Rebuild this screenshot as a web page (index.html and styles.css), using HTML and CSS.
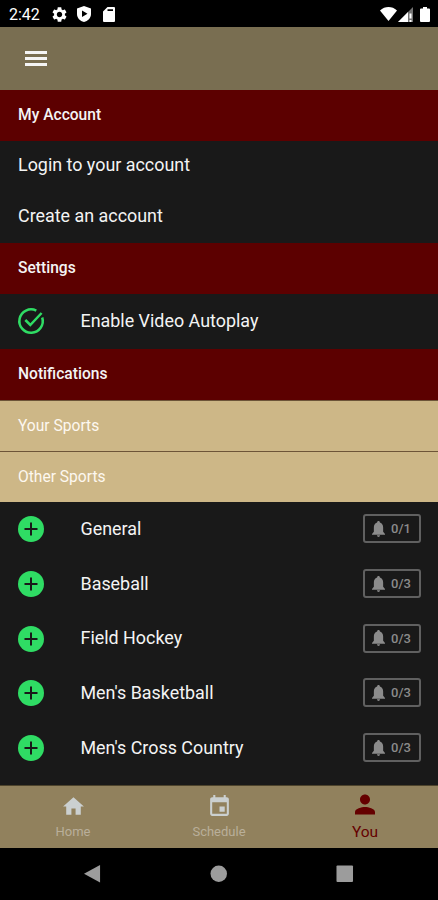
FILE: index.html
```html
<!DOCTYPE html>
<html lang="en">
<head>
    <meta charset="UTF-8">
    <title>Account</title>
    <meta name="viewport" content="width=device-width, initial-scale=1.0">
    <link rel="stylesheet" href="styles.css">
</head>
<body>
    <svg class="sprite">
        <symbol id="plus" viewBox="0 0 26 26">
            <circle cx="13" cy="13" r="13"/>
            <path class="cross" d="M13 6.500v13M6.500 13h13"/>
        </symbol>
        <symbol id="bell" viewBox="0 0 14 17">
            <path d="M7 0c1 0 1.500.7 1.500 1.600C11 2.300 12 4.500 12 7v4.500l2 2.500v.8H0V14l2-2.500V7c0-2.500 1-4.700 3.500-5.400C5.500.7 6 0 7 0zM5.300 15.300h3.400Q8.500 17 7 17t-1.700-1.700z"/>
        </symbol>
    </svg>

    <div class="status-bar">
        <span class="time">2:42</span>
        <svg class="gear" viewBox="2 2 20 20"><path d="M19.14 12.94c.04-.3.06-.61.06-.94 0-.32-.02-.64-.07-.94l2.03-1.58c.18-.14.23-.41.12-.61l-1.92-3.32c-.12-.22-.37-.29-.59-.22l-2.39.96c-.5-.38-1.03-.7-1.62-.94l-.36-2.54c-.04-.24-.24-.41-.48-.41h-3.84c-.24 0-.43.17-.47.41l-.36 2.54c-.59.24-1.13.57-1.62.94l-2.39-.96c-.22-.08-.47 0-.59.22L2.74 8.87c-.12.21-.08.47.12.61l2.03 1.58c-.05.3-.09.63-.09.94s.02.64.07.94l-2.03 1.58c-.18.14-.23.41-.12.61l1.92 3.32c.12.22.37.29.59.22l2.39-.96c.5.38 1.03.7 1.62.94l.36 2.54c.05.24.24.41.48.41h3.84c.24 0 .44-.17.47-.41l.36-2.54c.59-.24 1.13-.56 1.62-.94l2.39.96c.22.08.47 0 .59-.22l1.92-3.32c.12-.22.07-.47-.12-.61l-2.01-1.58zM12 15.6c-1.98 0-3.6-1.62-3.6-3.6s1.62-3.6 3.6-3.6 3.6 1.62 3.6 3.6-1.62 3.6-3.6 3.6z"/></svg>
        <svg class="shield" viewBox="0 0 14 16"><path fill-rule="evenodd" d="M7 0l7 2.500V8c0 4-3 7-7 8-4-1-7-4-7-8V2.500zM5 4.500v6.600L10.500 7.800z"/></svg>
        <svg class="sd" viewBox="0 0 12 15"><path fill-rule="evenodd" d="M4.500 0H11q1 0 1 1v13q0 1-1 1H1q-1 0-1-1V4.500zM4.500 2.300v1.700h5.500V2.300z"/></svg>
        <svg class="wifi" viewBox="0 0 17 14"><path d="M8.500 14L0 3.500C5-1.100 12-1.100 17 3.500z"/></svg>
        <svg class="signal" viewBox="0 0 15 15"><path class="faint" d="M0 15L15 0v15z"/><path d="M0 15L10 5v10zM11.500 6.500h2v5h-2zM11.500 13h2v2h-2z"/></svg>
        <svg class="battery" viewBox="0 0 10 15"><path d="M3 0h4v1.500h2q1 0 1 1V14q0 1-1 1H1q-1 0-1-1V2.500q0-1 1-1h2z"/></svg>
    </div>

    <header class="app-bar">
        <svg class="menu" viewBox="0 0 22 16"><path d="M0 0h22v3H0zM0 6h22v3H0zM0 12h22v3H0z"/></svg>
    </header>

    <main>
        <h2 class="section">My Account</h2>
        <a class="link">Login to your account</a>
        <a class="link">Create an account</a>

        <h2 class="section">Settings</h2>
        <div class="row toggle">
            <svg class="icon check" viewBox="0 0 26 26"><path d="M24.200 9.500A11.700 11.700 0 1 1 18.300 2.600M7.300 12l5 5L23.600 5"/></svg>
            <span class="name">Enable Video Autoplay</span>
        </div>

        <h2 class="section">Notifications</h2>
        <h3 class="group">Your Sports</h3>
        <h3 class="group">Other Sports</h3>

        <div class="row">
            <svg class="icon"><use href="#plus"/></svg>
            <span class="name">General</span>
            <span class="count"><svg><use href="#bell"/></svg>0/1</span>
        </div>
        <div class="row">
            <svg class="icon"><use href="#plus"/></svg>
            <span class="name">Baseball</span>
            <span class="count"><svg><use href="#bell"/></svg>0/3</span>
        </div>
        <div class="row">
            <svg class="icon"><use href="#plus"/></svg>
            <span class="name">Field Hockey</span>
            <span class="count"><svg><use href="#bell"/></svg>0/3</span>
        </div>
        <div class="row">
            <svg class="icon"><use href="#plus"/></svg>
            <span class="name">Men's Basketball</span>
            <span class="count"><svg><use href="#bell"/></svg>0/3</span>
        </div>
        <div class="row">
            <svg class="icon"><use href="#plus"/></svg>
            <span class="name">Men's Cross Country</span>
            <span class="count"><svg><use href="#bell"/></svg>0/3</span>
        </div>
    </main>

    <nav class="tabs">
        <a class="tab">
            <svg viewBox="0 0 24 24"><path d="M10 20v-6h4v6h5v-8h3L12 3 2 12h3v8z"/></svg>
            Home
        </a>
        <a class="tab">
            <svg viewBox="0 0 24 24"><path d="M17 12h-5v5h5v-5zM16 1v2H8V1H6v2H5c-1.110 0-1.990.9-1.990 2L3 19c0 1.100.89 2 2 2h14c1.100 0 2-.9 2-2V5c0-1.100-.9-2-2-2h-1V1h-2zm3 18H5V8h14v11z"/></svg>
            Schedule
        </a>
        <a class="tab active">
            <svg viewBox="4 4 16 16"><path d="M12 12c2.210 0 4-1.790 4-4s-1.790-4-4-4-4 1.790-4 4 1.790 4 4 4zm0 2c-2.670 0-8 1.340-8 4v2h16v-2c0-2.660-5.330-4-8-4z"/></svg>
            You
        </a>
    </nav>

    <div class="system-nav">
        <svg viewBox="0 0 18 18"><path d="M0 9L16.500 0v18z"/></svg>
        <svg viewBox="0 0 18 18"><circle cx="9" cy="9" r="8.500"/></svg>
        <svg viewBox="0 0 18 18"><rect x="0.500" y="0.500" width="17" height="17" rx="1"/></svg>
    </div>
</body>
</html>
```
FILE: styles.css
```css
:root {
    --bg: #191919;
    --maroon: #5c0000;
    --gold: #cdb787;
    --green: #2fdc64;
    --text: #f4f4f4;
    --muted: #8b8b8b;
}
* {
    box-sizing: border-box;
    margin: 0;
    padding: 0;
}
body {
    font-family: Roboto, sans-serif;
    background: var(--bg);
    color: var(--text);
    height: 900px;
    display: flex;
    flex-direction: column;
    overflow: hidden;
}
svg {
    display: block;
    fill: currentColor;
    flex: none;
}
.sprite {
    display: none;
}
.status-bar {
    height: 27px;
    flex: none;
    background: #000;
    display: flex;
    align-items: center;
    padding: 1px 8px 0 9px;
    color: #fff;
}
.time {
    font-size: 16px;
    width: 43px;
}
.gear {
    width: 15px;
    height: 15px;
}
.shield {
    width: 14px;
    height: 16px;
    margin-left: 10px;
}
.sd {
    width: 12px;
    height: 15px;
    margin-left: 12px;
}
.wifi {
    width: 17px;
    height: 14px;
    margin-left: auto;
}
.signal {
    width: 15px;
    height: 15px;
    margin-left: 1px;
}
.faint {
    opacity: 0.45;
}
.battery {
    width: 10px;
    height: 15px;
    margin-left: 7px;
}
.app-bar {
    height: 63px;
    flex: none;
    background: #796e51;
    display: flex;
    align-items: center;
    padding: 1px 25px 0;
}
.menu {
    width: 22px;
    height: 16px;
}
main {
    flex: 1;
}
.section, .group {
    display: flex;
    align-items: center;
    height: 51px;
    padding: 0 18px 1px;
    font-size: 15.600px;
}
.section {
    background: var(--maroon);
    font-weight: 500;
}
.group {
    background: var(--gold);
    border-top: 1px solid #6d5438;
    color: #fdf8f0;
    font-weight: 400;
}
.link {
    display: flex;
    align-items: center;
    height: 51px;
    padding: 0 18px 4px;
    font-size: 17.900px;
}
.row {
    display: flex;
    align-items: center;
    height: 54.700px;
    padding: 0 17px 0 18px;
}
.toggle {
    height: 55px;
}
.icon {
    width: 26px;
    height: 26px;
    color: var(--green);
}
.cross {
    stroke: var(--bg);
    stroke-width: 2;
}
.check {
    fill: none;
    stroke: currentColor;
    stroke-width: 2.500;
    margin-bottom: 1px;
    overflow: visible;
}
.name {
    flex: 1;
    margin-left: 36.500px;
    padding-bottom: 2px;
    font-size: 17.900px;
}
.count {
    display: flex;
    align-items: center;
    justify-content: center;
    gap: 6px;
    width: 58px;
    height: 29px;
    margin-bottom: 1px;
    padding-right: 1px;
    border: 2px solid #606060;
    border-radius: 3px;
    color: var(--muted);
    font-size: 13px;
    font-weight: 500;
}
.count svg {
    width: 13px;
    height: 16px;
}
.tabs {
    display: flex;
    height: 63px;
    flex: none;
    background: #91815d;
    border-top: 1px solid #4e442c;
    color: #b9af9a;
}
.tab {
    flex: 1;
    display: flex;
    flex-direction: column;
    align-items: center;
    padding-top: 8px;
    font-size: 13px;
    line-height: 25px;
}
.tab svg {
    width: 25px;
    height: 25px;
    color: #cbd0d0;
}
.active {
    font-size: 15.500px;
}
.active, .active svg {
    color: #650000;
}
.active svg {
    width: 20px;
    height: 21px;
    margin-bottom: 5px;
}
.system-nav {
    height: 52px;
    flex: none;
    background: #000;
    display: flex;
    align-items: center;
    justify-content: center;
    gap: 108.500px;
    color: #9c9c9c;
}
.system-nav svg {
    width: 17.500px;
    height: 17.500px;
}
```
